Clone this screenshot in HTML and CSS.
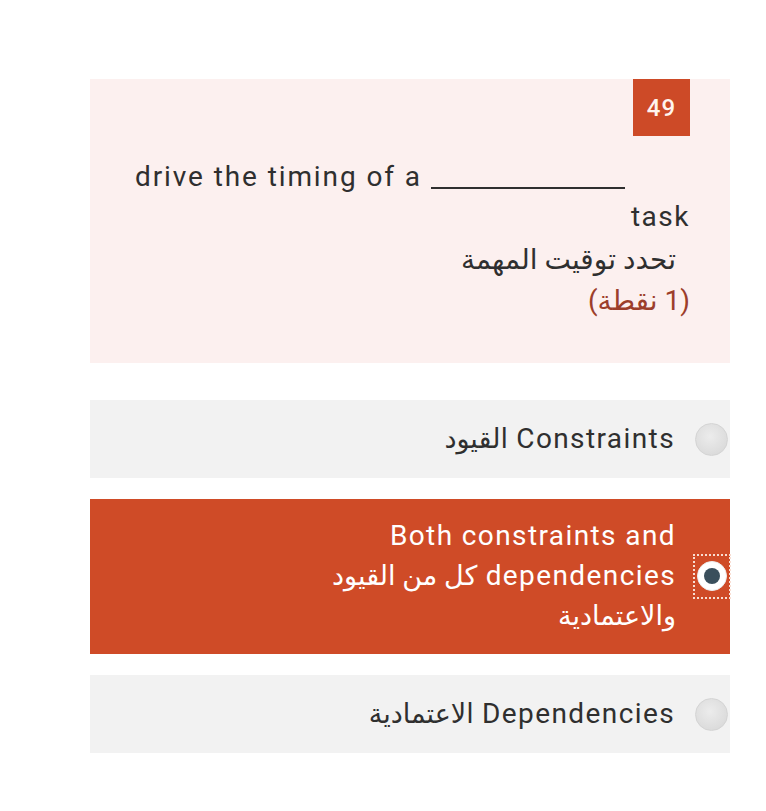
FILE: index.html
```html
<!DOCTYPE html>
<html lang="en">
<head>
<meta charset="utf-8">
<link rel="stylesheet" href="styles.css">
</head>
<body>
<div class="page">
  <section class="question">
    <div class="badge-row"><span class="badge">49</span></div>
    <div class="q-line">drive the timing of a <span class="blank"></span></div>
    <div class="q-task">task</div>
    <div class="q-ar" dir="rtl">تحدد توقيت المهمة</div>
    <div class="q-points" dir="rtl">(1 نقطة)</div>
  </section>

  <div class="options">
    <div class="option" dir="rtl">
      <span class="radio"></span>
      <span class="opt-text">Constraints <span class="ar">القيود</span></span>
    </div>
    <div class="option selected" dir="rtl">
      <span class="radio-focus"><span class="radio checked"></span></span>
      <span class="opt-text narrow">Both constraints and dependencies <span class="ar">كل من القيود والاعتمادية</span></span>
    </div>
    <div class="option" dir="rtl">
      <span class="radio"></span>
      <span class="opt-text">Dependencies <span class="ar">الاعتمادية</span></span>
    </div>
  </div>
</div>
</body>
</html>
```

FILE: styles.css
```css
html, body {
  margin: 0;
  padding: 0;
  background: #ffffff;
}

body {
  font-family: Roboto, "DejaVu Sans", sans-serif;
  color: #2f2f2f;
}

.page {
  width: 640px;
  padding: 79px 0 40px 90px;
}

.question {
  background: #fcf0ef;
  height: 284px;
  padding: 0 40px 0 45px;
  box-sizing: border-box;
}

.badge-row {
  display: flex;
  justify-content: flex-end;
}

.badge {
  width: 57px;
  height: 57px;
  background: #cd4a27;
  color: #fff4ee;
  font-size: 24px;
  font-weight: 500;
  letter-spacing: 1px;
  display: flex;
  align-items: center;
  justify-content: center;
}

.q-line {
  font-size: 28px;
  letter-spacing: 1.9px;
  line-height: 40px;
  margin-top: 21px;
  display: flex;
  align-items: baseline;
  white-space: pre;
}

.blank {
  display: inline-block;
  width: 194px;
  border-bottom: 2px solid #2f2f2f;
  transform: translateY(3px);
}

.q-task {
  font-size: 28px;
  letter-spacing: 1.5px;
  line-height: 40px;
  text-align: right;
}

.q-ar {
  font-size: 28px;
  line-height: 46px;
  padding-right: 14px;
  text-align: right;
}

.q-points {
  font-size: 28px;
  line-height: 36px;
  color: #9c3e2b;
  text-align: right;
}

.options {
  margin-top: 37px;
  display: flex;
  flex-direction: column;
  gap: 21px;
}

.option {
  background: #f2f2f2;
  display: flex;
  align-items: center;
  gap: 20px;
  padding: 19px 2px 19px 0;
  min-height: 40px;
  font-size: 28px;
  letter-spacing: 1.4px;
  line-height: 40px;
  color: #2f2f2f;
}

.option.selected {
  background: #cf4b27;
  color: #ffffff;
  padding-top: 17px;
  padding-bottom: 18px;
}

.opt-text {
  text-align: right;
}

.ar {
  letter-spacing: 0;
  font-size: 27px;
  line-height: 1;
}

.opt-text.narrow {
  max-width: 360px;
}

.radio {
  width: 33px;
  height: 33px;
  border-radius: 50%;
  box-sizing: border-box;
  background: radial-gradient(circle at 45% 40%, #ececec 0%, #dcdcdc 70%, #d0d0d0 100%);
  border: 1px solid #d4d4d4;
  flex: none;
}

.radio-focus {
  flex: none;
  width: 38px;
  height: 45px;
  margin-right: -3px;
  margin-left: -3px;
  box-sizing: border-box;
  border: 2px dotted #f8ddd2;
  display: flex;
  align-items: center;
  justify-content: center;
}

.radio.checked {
  width: 30px;
  height: 30px;
  background: #ffffff;
  border: 1px solid #eeeeee;
  position: relative;
}

.radio.checked::after {
  content: "";
  position: absolute;
  left: 50%;
  top: 50%;
  width: 16px;
  height: 16px;
  margin: -8px 0 0 -8px;
  border-radius: 50%;
  background: #3a4f5c;
}
```
